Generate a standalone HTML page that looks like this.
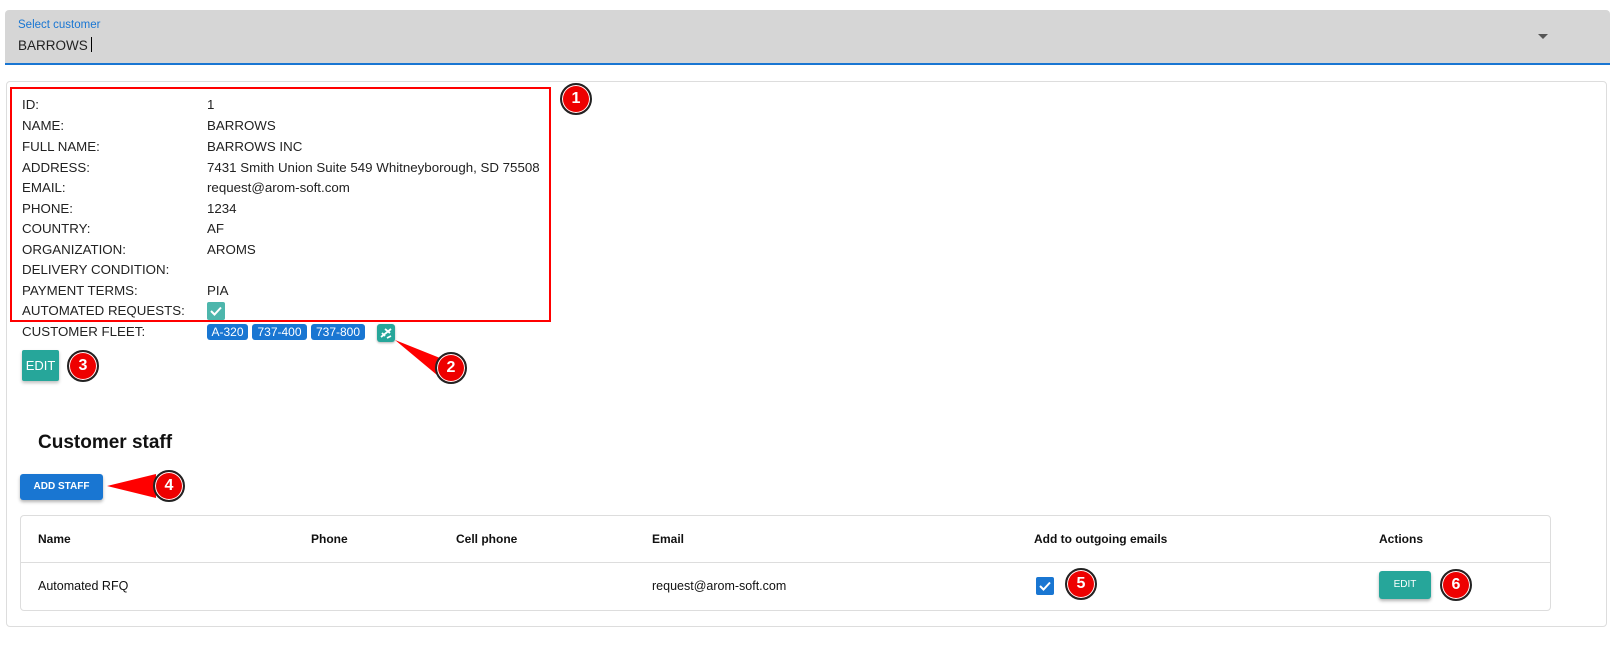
<!DOCTYPE html>
<html><head><meta charset="utf-8"><style>
*{box-sizing:border-box;margin:0;padding:0}
body{width:1610px;height:656px;background:#fff;font-family:"Liberation Sans",Arial,sans-serif;color:#222;position:relative;overflow:hidden}
.abs{position:absolute}
.field{left:5px;top:10px;width:1605px;height:55px;background:#d6d6d6;border-radius:4px 4px 0 0;border-bottom:2px solid #1976d2}
.card{left:6px;top:81px;width:1601px;height:546px;border:1px solid #ddd;border-radius:4px}
.redbox{left:10px;top:87px;width:541px;height:235px;border:2px solid #f00}
.lbl,.val{position:absolute;font-size:13.3px;color:#222;white-space:nowrap}
.lbl{left:22px}.val{left:207px}
.badge{position:absolute;width:32px;height:32px;border-radius:50%;background:#e00;border:2px solid #222;box-shadow:0 0 0 1px #fff inset;color:#fff;font-weight:bold;font-size:16px;text-align:center;line-height:28px}
.chip{position:absolute;top:324px;height:16px;background:#1976d2;color:#fff;font-size:12px;line-height:16px;border-radius:3px;text-align:center}
.th{position:absolute;top:532px;font-size:12px;font-weight:bold;color:#111}
.td{position:absolute;top:579px;font-size:12.5px;color:#111}
</style></head><body>
<div class="abs field"></div>
<div class="abs" style="left:18px;top:19px;font-size:11.5px;color:#1976d2">Select customer</div>
<div class="abs" style="left:18px;top:37px;font-size:13.5px;color:#222">BARROWS<span style="display:inline-block;width:1px;height:15px;background:#000;margin-left:3px;vertical-align:-2px"></span></div>
<div class="abs" style="left:1538px;top:34px;width:0;height:0;border-left:5px solid transparent;border-right:5px solid transparent;border-top:5px solid #555"></div>
<div class="abs card"></div>
<div class="abs redbox"></div>
<div class="lbl" style="top:97px">ID:</div><div class="val" style="top:97px">1</div>
<div class="lbl" style="top:118px">NAME:</div><div class="val" style="top:118px">BARROWS</div>
<div class="lbl" style="top:139px">FULL NAME:</div><div class="val" style="top:139px">BARROWS INC</div>
<div class="lbl" style="top:160px">ADDRESS:</div><div class="val" style="top:160px">7431 Smith Union Suite 549 Whitneyborough, SD 75508</div>
<div class="lbl" style="top:180px">EMAIL:</div><div class="val" style="top:180px">request@arom-soft.com</div>
<div class="lbl" style="top:201px">PHONE:</div><div class="val" style="top:201px">1234</div>
<div class="lbl" style="top:221px">COUNTRY:</div><div class="val" style="top:221px">AF</div>
<div class="lbl" style="top:242px">ORGANIZATION:</div><div class="val" style="top:242px">AROMS</div>
<div class="lbl" style="top:262px">DELIVERY CONDITION:</div>
<div class="lbl" style="top:283px">PAYMENT TERMS:</div><div class="val" style="top:283px">PIA</div>
<div class="lbl" style="top:303px">AUTOMATED REQUESTS:</div>
<div class="abs" style="left:207px;top:302px;width:18px;height:18px;background:#4db6ac;border-radius:2px"><svg width="18" height="18"><path d="M4 9l3.5 3.5L14 5.5" stroke="#fff" stroke-width="2" fill="none"/></svg></div>
<div class="lbl" style="top:324px">CUSTOMER FLEET:</div>
<div class="chip" style="left:207px;width:41px">A-320</div>
<div class="chip" style="left:252px;width:55px">737-400</div>
<div class="chip" style="left:311px;width:54px">737-800</div>
<div class="abs" style="left:377px;top:324px;width:18px;height:18px;background:#26a69a;border-radius:3px;box-shadow:0 1px 2px rgba(0,0,0,.3)"><svg width="18" height="18"><path d="M4 13l10-8M8 5l5 4M5 9l3 3M10 14l4-2" stroke="#fff" stroke-width="1.8" fill="none"/></svg></div>
<svg class="abs" style="left:0;top:0" width="1610" height="656">
<polygon points="395,340 440,358 437,375" fill="#f00"/>
<polygon points="107,486 156,474 156,498" fill="#f00"/>
</svg>
<div class="badge" style="left:560px;top:83px">1</div>
<div class="badge" style="left:435px;top:352px">2</div>
<div class="abs" style="left:22px;top:350px;width:37px;height:31px;background:#26a69a;color:#fff;font-size:13px;line-height:31px;text-align:center;border-radius:2px;box-shadow:0 2px 3px rgba(0,0,0,.25)">EDIT</div>
<div class="badge" style="left:67px;top:350px">3</div>
<div class="abs" style="left:38px;top:432px;font-size:19px;font-weight:bold;color:#111">Customer staff</div>
<div class="abs" style="left:20px;top:474px;width:83px;height:26px;background:#1976d2;color:#fff;font-size:10px;font-weight:bold;line-height:26px;text-align:center;border-radius:3px;box-shadow:0 2px 3px rgba(0,0,0,.3)">ADD STAFF</div>
<div class="badge" style="left:153px;top:470px">4</div>
<div class="abs" style="left:20px;top:515px;width:1531px;height:96px;border:1px solid #ddd;border-radius:4px"></div>
<div class="abs" style="left:21px;top:562px;width:1529px;height:1px;background:#ddd"></div>
<div class="th" style="left:38px">Name</div>
<div class="th" style="left:311px">Phone</div>
<div class="th" style="left:456px">Cell phone</div>
<div class="th" style="left:652px">Email</div>
<div class="th" style="left:1034px">Add to outgoing emails</div>
<div class="th" style="left:1379px">Actions</div>
<div class="td" style="left:38px">Automated RFQ</div>
<div class="td" style="left:652px">request@arom-soft.com</div>
<div class="abs" style="left:1036px;top:577px;width:18px;height:18px;background:#1976d2;border-radius:2px"><svg width="18" height="18"><path d="M4 9l3.5 3.5L14 5.5" stroke="#fff" stroke-width="2" fill="none"/></svg></div>
<div class="badge" style="left:1065px;top:568px">5</div>
<div class="abs" style="left:1379px;top:571px;width:52px;height:28px;background:#26a69a;color:#fff;font-size:10px;line-height:28px;text-align:center;border-radius:3px;box-shadow:0 2px 3px rgba(0,0,0,.3)">EDIT</div>
<div class="badge" style="left:1440px;top:569px">6</div>
</body></html>
